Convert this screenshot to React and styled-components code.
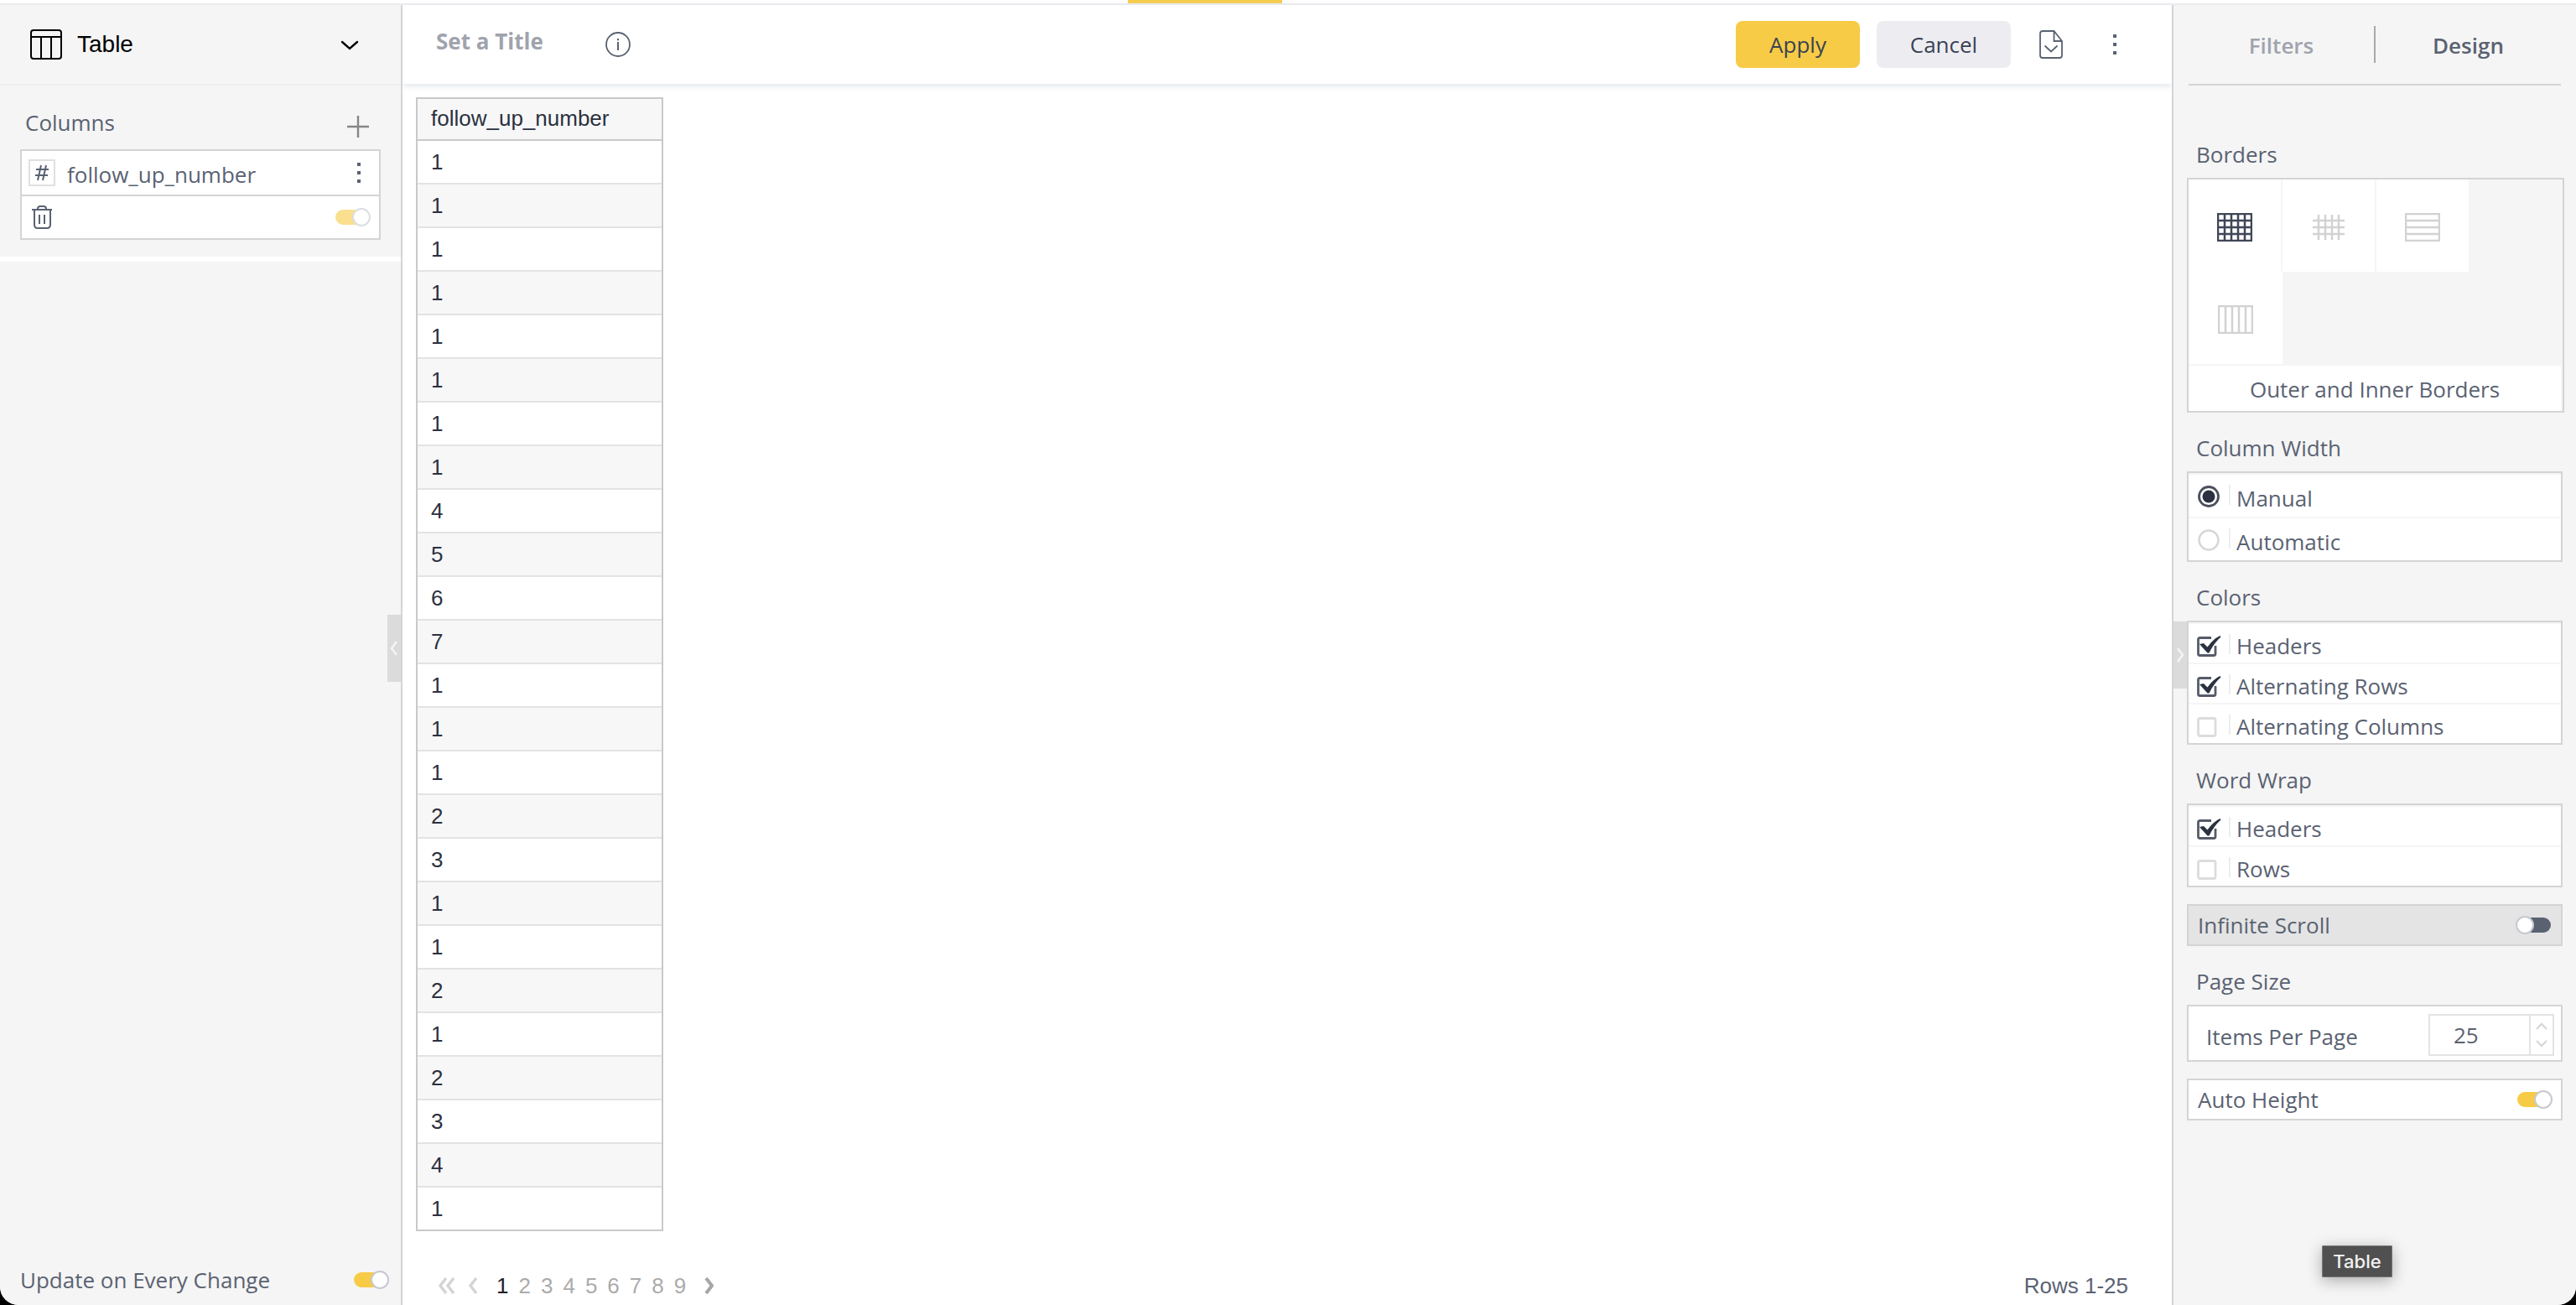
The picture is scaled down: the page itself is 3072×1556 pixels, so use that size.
import React, { useState } from "react";
import styled, { createGlobalStyle } from "styled-components";

const UI = `"Open Sans", "Noto Sans", sans-serif`;
const GRID = `"Liberation Sans", Arial, sans-serif`;

const color = {
  text: "#5a6272",
  dark: "#2b3140",
  muted: "#a0a3ad",
  panel: "#f5f5f5",
  line: "#d4d4d4",
  soft: "#ededf1",
  accent: "#f7cb45",
};

const Global = createGlobalStyle`
  * { box-sizing: border-box; }
  body { margin: 0; background: #000; }
  button, input { font: inherit; color: inherit; }
  button { border: 0; padding: 0; background: none; cursor: pointer; }
  svg { display: block; flex: none; }
`;

const Window = styled.div`
  display: flex;
  flex-direction: column;
  height: 100vh;
  overflow: hidden;
  border-radius: 0 0 22px 22px;
  background: #fff;
  color: ${color.text};
  font: 26px/36px ${UI};
`;

const TopStrip = styled.div`
  display: flex;
  justify-content: center;
  flex: none;
  height: 6px;
  padding-right: 198px;
  border-bottom: 2px solid ${color.soft};
`;

const ActiveTab = styled.div`
  width: 184px;
  background: ${color.accent};
`;

const Body = styled.div`
  display: grid;
  grid-template-columns: 480px 1fr 482px;
  flex: 1;
  min-height: 0;
`;

/* Left panel */

const LeftPanel = styled.aside`
  position: relative;
  display: flex;
  flex-direction: column;
  border-right: 2px solid ${color.line};
  background: ${color.panel};
`;

const TypePicker = styled.button`
  display: flex;
  align-items: center;
  height: 96px;
  padding: 0 50px 0 36px;
  border-bottom: 2px solid ${color.soft};
  color: #000;
  font: 28px/32px ${GRID};

  span { flex: 1; margin-left: 18px; text-align: left; }
`;

const ColumnsSection = styled.section`
  padding: 26px 24px 20px;
  border-bottom: 6px solid #fff;
`;

const SectionHead = styled.div`
  display: flex;
  align-items: flex-start;
  justify-content: space-between;
  height: 50px;
  padding: 0 14px 0 6px;
`;

const SectionTitle = styled.h2`
  margin: 0;
  font-size: 26px;
  font-weight: 400;
`;

const FieldCard = styled.div`
  border: 2px solid ${color.line};
  background: #fff;
`;

const FieldRow = styled.div`
  display: flex;
  align-items: center;
  height: ${(p) => (p.$last ? 50 : 54)}px;
  padding: 0 ${(p) => (p.$last ? 10 : 22)}px 0 ${(p) => (p.$last ? 12 : 8)}px;
  ${(p) => (p.$last ? "justify-content: space-between;" : `border-bottom: 2px solid ${color.line};`)}
`;

const FieldName = styled.span`
  flex: 1;
  padding: 4px 0 0 14px;
`;

const Spacer = styled.div`
  flex: 1;
`;

const UpdateRow = styled.label`
  display: flex;
  align-items: center;
  justify-content: space-between;
  padding: 0 14px 12px 24px;
`;

const Handle = styled.button`
  position: absolute;
  top: ${(p) => (p.$side === "left" ? 727 : 735)}px;
  ${(p) => (p.$side === "left" ? "right: 0;" : "left: 0;")}
  display: grid;
  place-items: center;
  width: 16px;
  height: 80px;
  background: #dbdbdb;
`;

/* Switch */

const Switch = styled.input.attrs({ type: "checkbox", role: "switch" })`
  appearance: none;
  display: flex;
  align-items: center;
  flex: none;
  flex-direction: row-reverse;
  width: 42px;
  height: 22px;
  margin: 0;
  opacity: ${(p) => (p.$faded ? 0.6 : 1)};
  cursor: pointer;

  &::before {
    content: "";
    width: 32px;
    height: 18px;
    border-radius: 9px;
    background: ${color.text};
  }
  &::after {
    content: "";
    box-sizing: border-box;
    width: 22px;
    height: 22px;
    margin-right: -12px;
    border: 2px solid #c6c9d0;
    border-radius: 50%;
    background: #fff;
    z-index: 1;
  }
  &:checked { flex-direction: row; }
  &:checked::before { background: ${color.accent}; }
  &:checked::after { margin: 0 0 0 -12px; }
`;

/* Centre */

const Main = styled.main`
  display: flex;
  flex-direction: column;
  min-width: 0;
`;

const Toolbar = styled.header`
  display: flex;
  align-items: center;
  flex: none;
  height: 94px;
  padding: 0 66px 0 38px;
  box-shadow: 0 2px 8px 0 #dfe3e8;
`;

const TitleInput = styled.input`
  width: 186px;
  height: 36px;
  margin: 0 18px 8px 0;
  padding: 0 2px;
  border: 0;
  outline: 0;
  background: none;
  font-weight: 700;

  &::placeholder { color: ${color.muted}; opacity: 1; }
`;

const IconButton = styled.button`
  display: grid;
  place-items: center;
  color: ${color.text};
`;

const AddButton = styled(IconButton)`
  margin-top: 10px;
`;

const MenuButton = styled(IconButton)`
  margin-left: 60px;
`;

const Actions = styled.div`
  display: flex;
  align-items: center;
  margin-left: auto;
`;

const ActionButton = styled.button`
  width: ${(p) => (p.$primary ? 148 : 160)}px;
  height: 56px;
  margin-right: ${(p) => (p.$primary ? 20 : 34)}px;
  border-radius: 8px;
  background: ${(p) => (p.$primary ? color.accent : color.soft)};
  color: #3a4254;
`;

const Canvas = styled.div`
  flex: 1;
  padding: 16px;
`;

const DataTable = styled.table`
  width: 295px;
  border: 2px solid #c9c9c9;
  border-bottom: 0;
  border-spacing: 0;
  color: ${color.dark};
  font: 26px/30px ${GRID};

  th, td {
    height: 52px;
    padding: 0 16px;
    border-bottom: 2px solid #e3e3e3;
    text-align: left;
    font-weight: 400;
  }
  th { height: 50px; border-color: #c9c9c9; background: #f7f7f7; padding-bottom: 2px; }
  tbody tr:nth-child(even) { background: #f7f7f7; }
  tbody tr:last-child td { border-color: #c9c9c9; }
`;

const Footer = styled.footer`
  display: flex;
  align-items: center;
  justify-content: space-between;
  height: 30px;
  margin-bottom: 8px;
  padding: 0 52px 0 42px;
  font: 26px/30px ${GRID};
`;

const Pager = styled.nav`
  display: flex;
  align-items: center;
  gap: 12px;
`;

const PageList = styled.div`
  display: flex;
  gap: 12px;
  margin: 0 8px;
`;

const PageButton = styled.button`
  color: ${(p) => (p.$current ? "#1d2026" : "#ababab")};
`;

const PagerArrow = styled(IconButton)`
  width: ${(p) => (p.$double ? 22 : 16)}px;
  height: 30px;
  color: ${(p) => (p.disabled ? "#d4d4d4" : "#a6a6a6")};
`;

/* Right panel */

const RightPanel = styled.aside`
  position: relative;
  border-left: 2px solid ${color.line};
  background: ${color.panel};
  padding: 0 16px;
`;

const Tabs = styled.div`
  display: flex;
  align-items: center;
  height: 96px;
  margin: 0 2px 40px;
  border-bottom: 2px solid ${color.line};
`;

const Tab = styled.button`
  flex: 1;
  height: 44px;
  padding-top: 2px;
  font-weight: 600;
  color: ${(p) => (p.$active ? color.text : color.muted)};
  & + & { border-left: 2px solid #a9a9a9; }
`;

const Group = styled.fieldset`
  margin: 0;
  padding: 0;
  border: 0;
  min-width: 0;
`;

const Legend = styled.legend`
  display: block;
  padding: 24px 11px 10px;
`;

const Card = styled.div`
  border: 2px solid ${color.line};
  background: #fff;
`;

const BorderCard = styled(Card)`
  margin-right: -2px;
  background: ${color.panel};
`;

const BorderGrid = styled.div`
  display: grid;
  grid-template-columns: repeat(3, 112px);
  grid-auto-rows: 110px;
`;

const BorderOption = styled.button`
  display: grid;
  place-items: center;
  margin-right: ${(p) => (p.$wide ? 0 : 2)}px;
  padding-top: 4px;
  background: #fff;
  color: ${(p) => (p.$active ? "#3f4657" : "#d2d2d2")};
`;

const Caption = styled.div`
  height: 54px;
  margin: 2px 2px 0 0;
  padding: 10px 0;
  background: #fff;
  text-align: center;
  line-height: 36px;
`;

const Mark = styled.span`
  display: grid;
  width: 41px;
  height: 24px;
  border-right: 2px solid #ededed;
  cursor: pointer;

  input, svg { grid-area: 1 / 1; }
  svg { pointer-events: none; overflow: visible; }
  input { appearance: none; width: 28px; height: 28px; margin: 0; }
`;

const Option = styled.label`
  display: flex;
  align-items: flex-start;
  height: ${(p) => (p.$tall ? 52 : 48)}px;
  padding: ${(p) => (p.$tall ? 10 : 8)}px 0 0 9px;
  border-top: 2px solid ${color.panel};

  ${Mark} { margin-top: ${(p) => (p.$tall ? 2 : 4)}px; }
`;

const OptionText = styled.span`
  margin-left: 7px;
`;

const SwitchRow = styled.label`
  display: flex;
  align-items: center;
  justify-content: space-between;
  height: 50px;
  margin-top: 20px;
  padding: 0 ${(p) => (p.$off ? 12 : 10)}px 0 11px;
  border: 2px solid ${color.line};
  background: ${(p) => (p.$off ? "#e4e4e4" : "#fff")};
`;

const SizeRow = styled(Card)`
  display: flex;
  align-items: center;
  justify-content: space-between;
  height: 68px;
  padding: 4px 8px 0 21px;

  label { padding-top: 4px; }
`;

const NumberBox = styled.div`
  display: flex;
  width: 150px;
  height: 50px;
  border: 2px solid #e3e3e3;
`;

const NumberInput = styled.input`
  appearance: textfield;
  width: 118px;
  border: 0;
  outline: 0;
  padding: 0 8px 0 28px;
  &::-webkit-inner-spin-button { appearance: none; }
`;

const Spinner = styled.div`
  display: grid;
  flex: 1;
  padding: 2px 0;
  border-left: 2px solid #e3e3e3;

  ${IconButton} { color: #d8d8d8; }
`;

const Tooltip = styled.div`
  position: absolute;
  right: 219px;
  bottom: 33px;
  width: 84px;
  height: 38px;
  border: 1px solid #777;
  border-radius: 1px;
  background: #505050;
  box-shadow: 0 4px 18px rgba(0, 0, 0, 0.3);
  color: #f2f2f2;
  font: 500 22px/36px Inter, sans-serif;
  text-align: center;
`;

/* Icons */

const Stroke = ({ w, h, sw = 2, children, ...rest }) => (
  <svg width={w} height={h} viewBox={`0 0 ${w} ${h}`} fill="none" stroke="currentColor" strokeWidth={sw} aria-hidden="true" {...rest}>
    {children}
  </svg>
);

const TableIcon = () => (
  <Stroke w={38} h={36}>
    <rect x="1" y="1" width="36" height="34" rx="3" />
    <path d="M1 9H37M13 9V35M25 9V35" />
  </Stroke>
);

const ChevronDown = () => (
  <Stroke w={22} h={14} sw={2.4}>
    <path d="M2 4L11 12L20 4" strokeLinecap="round" />
  </Stroke>
);

const PlusIcon = () => (
  <Stroke w={26} h={26} sw={2.4}>
    <path d="M13 0V26M0 13H26" stroke="#868686" />
  </Stroke>
);

const HashIcon = () => (
  <Stroke w={32} h={32}>
    <rect x="1" y="1" width="30" height="30" stroke="#e0e0e0" fill="#fff" />
    <path d="M15 7L11 25M21 7L17 25M9 12H24M8 19H23" />
  </Stroke>
);

const DotsIcon = () => (
  <svg width="4" height="24" fill="currentColor" aria-hidden="true">
    <rect width="4" height="4" />
    <rect y="10" width="4" height="4" />
    <rect y="20" width="4" height="4" />
  </svg>
);

const TrashIcon = () => (
  <Stroke w={24} h={28}>
    <path d="M0 5H24M7 5V4Q7 1 10 1H14Q17 1 17 4V5M3 5V23Q3 27 7 27H18Q22 27 22 23V5M9 11V22M15 11V22" />
  </Stroke>
);

const InfoIcon = () => (
  <Stroke w={30} h={30} sw={1.8}>
    <circle cx="15" cy="15" r="14" />
    <path d="M15 12V22M15 8V10.2" strokeWidth="2" />
  </Stroke>
);

const DocIcon = () => (
  <Stroke w={28} h={34} sw={1.8}>
    <path d="M17.5 1H4Q1 1 1 4V30Q1 33 4 33H24Q27 33 27 30V13L17.5 1V13H27M6.5 18.5L14 25.5L21.5 18.5" />
  </Stroke>
);

const SideChevron = ({ flip }) => (
  <Stroke w={10} h={18} sw={2.4}>
    <path d={flip ? "M2 1L8 9L2 17" : "M8 1L2 9L8 17"} stroke="#f5f5f5" />
  </Stroke>
);

const AngleLeft = () => (
  <Stroke w={12} h={20} sw={3.4}>
    <path d="M10 1L3 10L10 19" />
  </Stroke>
);

const AngleDouble = () => (
  <Stroke w={22} h={20} sw={3.4}>
    <path d="M10 1L3 10L10 19M19 1L12 10L19 19" />
  </Stroke>
);

const AngleRight = () => (
  <Stroke w={12} h={20} sw={4}>
    <path d="M2 1L9 10L2 19" />
  </Stroke>
);

const SpinArrow = ({ up }) => (
  <Stroke w={14} h={9} sw={2.4}>
    <path d={up ? "M1 8L7 2L13 8" : "M1 1L7 7L13 1"} />
  </Stroke>
);

const borderPaths = {
  all: "M1 1H41V33H1ZM1 9H41M1 17H41M1 25H41M9 1V33M17 1V33M25 1V33M33 1V33",
  inner: "M2 9H40M2 17H40M2 25H40M9 2V32M17 2V32M25 2V32M33 2V32",
  rows: "M1 1H41V33H1ZM1 9H41M1 17H41M1 25H41",
  cols: "M1 1H41V33H1ZM9 1V33M17 1V33M25 1V33M33 1V33",
};

const BorderIcon = ({ kind }) => (
  <Stroke w={42} h={34} sw={2.5}>
    <path d={borderPaths[kind]} />
  </Stroke>
);

const CheckMark = ({ on }) => (
  <Stroke w={28} h={28} sw={2.8}>
    {on ? (
      <>
        <path d="M18 4.5H4.500Q2.500 4.500 2.500 6.500V23.500Q2.500 25.500 4.500 25.500H21Q23 25.500 23 23.500V14" stroke="#555b69" />
        <path d="M4 12L9 11L13.500 15.500Q20 6 28.500 2L29.500 3.500Q21 11 15.500 22.500H13.500Z" fill={color.dark} stroke="none" />
      </>
    ) : (
      <rect x="2.5" y="4.500" width="20.500" height="21" rx="2" stroke="#dcdcdc" />
    )}
  </Stroke>
);

const RadioMark = ({ on }) => (
  <Stroke w={28} h={28}>
    {on ? (
      <>
        <circle cx="15" cy="14" r="11.5" stroke="#4a4f5d" strokeWidth="2.8" />
        <circle cx="15" cy="14" r="7.5" fill={color.dark} stroke="none" />
      </>
    ) : (
      <circle cx="15" cy="14" r="11.5" stroke="#d6d6d6" strokeWidth="2.4" />
    )}
  </Stroke>
);

const CheckOption = ({ label, initial = false }) => {
  const [on, setOn] = useState(initial);
  return (
    <Option>
      <Mark>
        <input type="checkbox" checked={on} onChange={() => setOn(!on)} />
        <CheckMark on={on} />
      </Mark>
      <OptionText>{label}</OptionText>
    </Option>
  );
};

const values = [1, 1, 1, 1, 1, 1, 1, 1, 4, 5, 6, 7, 1, 1, 1, 2, 3, 1, 1, 2, 1, 2, 3, 4, 1];
const pages = [1, 2, 3, 4, 5, 6, 7, 8, 9];

export default function App() {
  const [width, setWidth] = useState("Manual");
  const [border, setBorder] = useState("all");
  return (
    <>
      <Global />
      <Window>
        <TopStrip>
          <ActiveTab />
        </TopStrip>
        <Body>
          <LeftPanel>
            <TypePicker>
              <TableIcon />
              <span>Table</span>
              <ChevronDown />
            </TypePicker>
            <ColumnsSection>
              <SectionHead>
                <SectionTitle>Columns</SectionTitle>
                <AddButton aria-label="Add column">
                  <PlusIcon />
                </AddButton>
              </SectionHead>
              <FieldCard>
                <FieldRow>
                  <HashIcon />
                  <FieldName>follow_up_number</FieldName>
                  <IconButton aria-label="Column menu">
                    <DotsIcon />
                  </IconButton>
                </FieldRow>
                <FieldRow $last>
                  <IconButton aria-label="Delete column">
                    <TrashIcon />
                  </IconButton>
                  <Switch $faded defaultChecked aria-label="Column enabled" />
                </FieldRow>
              </FieldCard>
            </ColumnsSection>
            <Spacer />
            <UpdateRow>
              Update on Every Change
              <Switch defaultChecked />
            </UpdateRow>
            <Handle $side="left" aria-label="Collapse left panel">
              <SideChevron />
            </Handle>
          </LeftPanel>

          <Main>
            <Toolbar>
              <TitleInput placeholder="Set a Title" aria-label="Title" />
              <IconButton aria-label="Information">
                <InfoIcon />
              </IconButton>
              <Actions>
                <ActionButton $primary>Apply</ActionButton>
                <ActionButton>Cancel</ActionButton>
                <IconButton aria-label="Export">
                  <DocIcon />
                </IconButton>
                <MenuButton aria-label="More">
                  <DotsIcon />
                </MenuButton>
              </Actions>
            </Toolbar>
            <Canvas>
              <DataTable>
                <thead>
                  <tr>
                    <th scope="col">follow_up_number</th>
                  </tr>
                </thead>
                <tbody>
                  {values.map((v, i) => (
                    <tr key={i}>
                      <td>{v}</td>
                    </tr>
                  ))}
                </tbody>
              </DataTable>
            </Canvas>
            <Footer>
              <Pager aria-label="Pages">
                <PagerArrow $double disabled aria-label="First page">
                  <AngleDouble />
                </PagerArrow>
                <PagerArrow disabled aria-label="Previous page">
                  <AngleLeft />
                </PagerArrow>
                <PageList>
                  {pages.map((n) => (
                    <PageButton key={n} $current={n === 1}>
                      {n}
                    </PageButton>
                  ))}
                </PageList>
                <PagerArrow aria-label="Next page">
                  <AngleRight />
                </PagerArrow>
              </Pager>
              <span>Rows 1-25</span>
            </Footer>
          </Main>

          <RightPanel>
            <Tabs role="tablist">
              <Tab role="tab" aria-selected="false">
                Filters
              </Tab>
              <Tab role="tab" $active aria-selected="true">
                Design
              </Tab>
            </Tabs>
            <Group>
              <Legend>Borders</Legend>
              <BorderCard>
                <BorderGrid>
                  {Object.keys(borderPaths).map((kind) => (
                    <BorderOption
                      key={kind}
                      $active={kind === border}
                      $wide={kind === "cols"}
                      onClick={() => setBorder(kind)}
                      aria-label={`Border style ${kind}`}
                    >
                      <BorderIcon kind={kind} />
                    </BorderOption>
                  ))}
                </BorderGrid>
                <Caption>Outer and Inner Borders</Caption>
              </BorderCard>
            </Group>
            <Group>
              <Legend>Column Width</Legend>
              <Card>
                {["Manual", "Automatic"].map((label) => (
                  <Option key={label} $tall>
                    <Mark>
                      <input type="radio" name="width" checked={width === label} onChange={() => setWidth(label)} />
                      <RadioMark on={width === label} />
                    </Mark>
                    <OptionText>{label}</OptionText>
                  </Option>
                ))}
              </Card>
            </Group>
            <Group>
              <Legend>Colors</Legend>
              <Card>
                <CheckOption label="Headers" initial />
                <CheckOption label="Alternating Rows" initial />
                <CheckOption label="Alternating Columns" />
              </Card>
            </Group>
            <Group>
              <Legend>Word Wrap</Legend>
              <Card>
                <CheckOption label="Headers" initial />
                <CheckOption label="Rows" />
              </Card>
            </Group>
            <SwitchRow $off>
              Infinite Scroll
              <Switch />
            </SwitchRow>
            <Group>
              <Legend>Page Size</Legend>
              <SizeRow>
                <label htmlFor="items">Items Per Page</label>
                <NumberBox>
                  <NumberInput id="items" type="number" defaultValue={25} />
                  <Spinner>
                    <IconButton aria-label="Increase">
                      <SpinArrow up />
                    </IconButton>
                    <IconButton aria-label="Decrease">
                      <SpinArrow />
                    </IconButton>
                  </Spinner>
                </NumberBox>
              </SizeRow>
            </Group>
            <SwitchRow>
              Auto Height
              <Switch defaultChecked />
            </SwitchRow>
            <Handle $side="right" aria-label="Collapse right panel">
              <SideChevron flip />
            </Handle>
            <Tooltip role="tooltip">Table</Tooltip>
          </RightPanel>
        </Body>
      </Window>
    </>
  );
}
